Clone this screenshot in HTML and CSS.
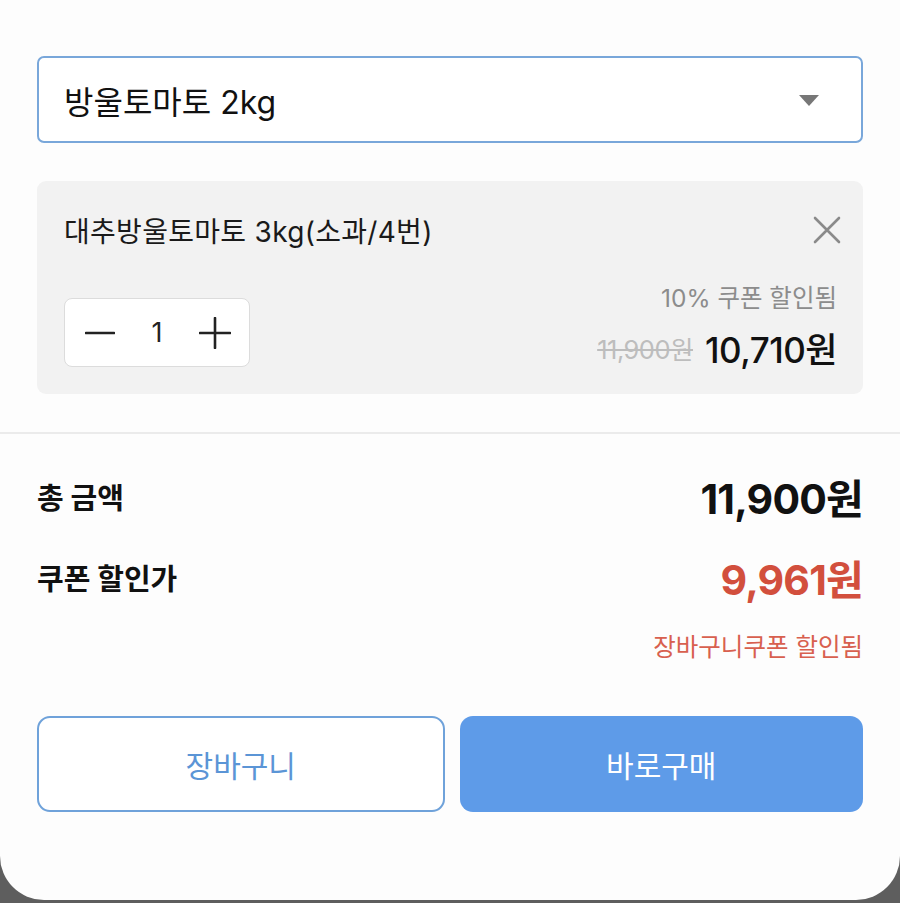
FILE: index.html
```html
<!DOCTYPE html>
<html lang="ko">
<head>
<meta charset="utf-8">
<link rel="stylesheet" href="styles.css">
</head>
<body>
<div class="sheet">
  <div class="top">
    <div class="select">
      <span class="select-text">방울토마토 2kg</span>
      <svg class="caret" width="20" height="12" viewBox="0 0 20 12"><path d="M0 0 H20 L10 11 Z" fill="#777"/></svg>
    </div>
    <div class="card">
      <div class="card-head">
        <span class="item-name">대추방울토마토 3kg(소과/4번)</span>
        <svg class="close" width="28" height="28" viewBox="0 0 28 28"><path d="M2 2 L26 26 M26 2 L2 26" stroke="#8a8a8a" stroke-width="2.6" stroke-linecap="round" fill="none"/></svg>
      </div>
      <div class="card-foot">
        <div class="qty">
          <svg width="30" height="30" viewBox="0 0 30 30"><path d="M1 15 H29" stroke="#222" stroke-width="2.6" stroke-linecap="round"/></svg>
          <span class="qty-num">1</span>
          <svg width="32" height="32" viewBox="0 0 32 32"><path d="M1 16 H31 M16 1 V31" stroke="#222" stroke-width="2.6" stroke-linecap="round"/></svg>
        </div>
        <div class="prices">
          <div class="coupon-note">10% 쿠폰 할인됨</div>
          <div class="price-row">
            <span class="old-price">11,900원</span>
            <span class="new-price">10,710원</span>
          </div>
        </div>
      </div>
    </div>
  </div>
  <div class="divider"></div>
  <div class="bottom">
    <div class="sum-row first">
      <span class="sum-label">총 금액</span>
      <span class="sum-value">11,900원</span>
    </div>
    <div class="sum-row second">
      <span class="sum-label">쿠폰 할인가</span>
      <span class="sum-value red">9,961원</span>
    </div>
    <div class="cart-note">장바구니쿠폰 할인됨</div>
    <div class="buttons">
      <button class="btn btn-outline">장바구니</button>
      <button class="btn btn-fill">바로구매</button>
    </div>
  </div>
</div>
</body>
</html>
```

FILE: styles.css
```css
* { box-sizing: border-box; }
html, body { margin: 0; padding: 0; }
body {
  background: #5e5e5e;
  font-family: "Inter", "Noto Sans CJK KR", sans-serif;
  color: #111;
}
.sheet {
  width: 900px;
  height: 900px;
  background: #fdfdfd;
  border-radius: 0 0 44px 44px;
  padding-top: 56px;
  overflow: hidden;
}
.top { padding: 0 37px; }
.select {
  height: 87px;
  border: 2px solid #79a7da;
  border-radius: 7px;
  background: #fff;
  display: flex;
  align-items: center;
  justify-content: space-between;
  padding: 0 42px 0 25px;
}
.select-text { font-size: 32px; color: #111; letter-spacing: 0; }
.caret { margin-top: 2px; }
.card {
  margin-top: 38px;
  background: #f2f2f2;
  border-radius: 9px;
  padding: 20px 22px 27px 27px;
}
.card-head {
  height: 58px;
  display: flex;
  align-items: center;
  justify-content: space-between;
}
.item-name { font-size: 28px; color: #1a1a1a; letter-spacing: 0.3px; }
.card-foot {
  margin-top: 24px;
  display: flex;
  justify-content: space-between;
  align-items: flex-end;
}
.qty {
  width: 186px;
  height: 69px;
  background: #fff;
  border: 1.5px solid #dcdcdc;
  border-radius: 8px;
  display: flex;
  align-items: center;
  justify-content: space-between;
  padding: 0 18px 0 20px;
}
.qty-num { font-size: 27px; color: #222; }
.prices {
  display: flex;
  flex-direction: column;
  align-items: flex-end;
  gap: 14px;
  padding-right: 4px;
}
.coupon-note { font-size: 24.5px; line-height: 30px; color: #8c8c8c; }
.price-row { display: flex; align-items: center; gap: 12px; height: 40px; }
.old-price { font-size: 25.5px; color: #bdbdbd; text-decoration: line-through; letter-spacing: -0.5px; }
.new-price { font-size: 35px; color: #111; font-weight: 500; letter-spacing: -0.5px; }
.divider {
  margin-top: 38px;
  height: 2px;
  background: #ebebeb;
}
.bottom { padding: 0 37px; }
.sum-row {
  height: 50px;
  display: flex;
  align-items: center;
  justify-content: space-between;
}
.sum-row.first { margin-top: 37px; }
.sum-row.second { margin-top: 31px; }
.sum-label { font-size: 29px; font-weight: 700; color: #111; }
.sum-value { font-size: 41px; font-weight: 700; color: #111; letter-spacing: -0.8px; }
.sum-value.red { color: #d24f3d; }
.cart-note {
  margin-top: 30px;
  height: 30px;
  line-height: 30px;
  text-align: right;
  font-size: 24.5px;
  color: #d8604f;
}
.buttons {
  margin-top: 54px;
  display: flex;
  gap: 15px;
}
.btn {
  flex: 1;
  height: 96px;
  border-radius: 13px;
  font-family: "Noto Sans CJK KR", sans-serif;
  font-size: 30px;
}
.btn-outline {
  background: #fff;
  border: 2px solid #6fa2da;
  color: #5b95d6;
}
.btn-fill {
  background: #5e9be8;
  border: none;
  color: #fff;
}
```
